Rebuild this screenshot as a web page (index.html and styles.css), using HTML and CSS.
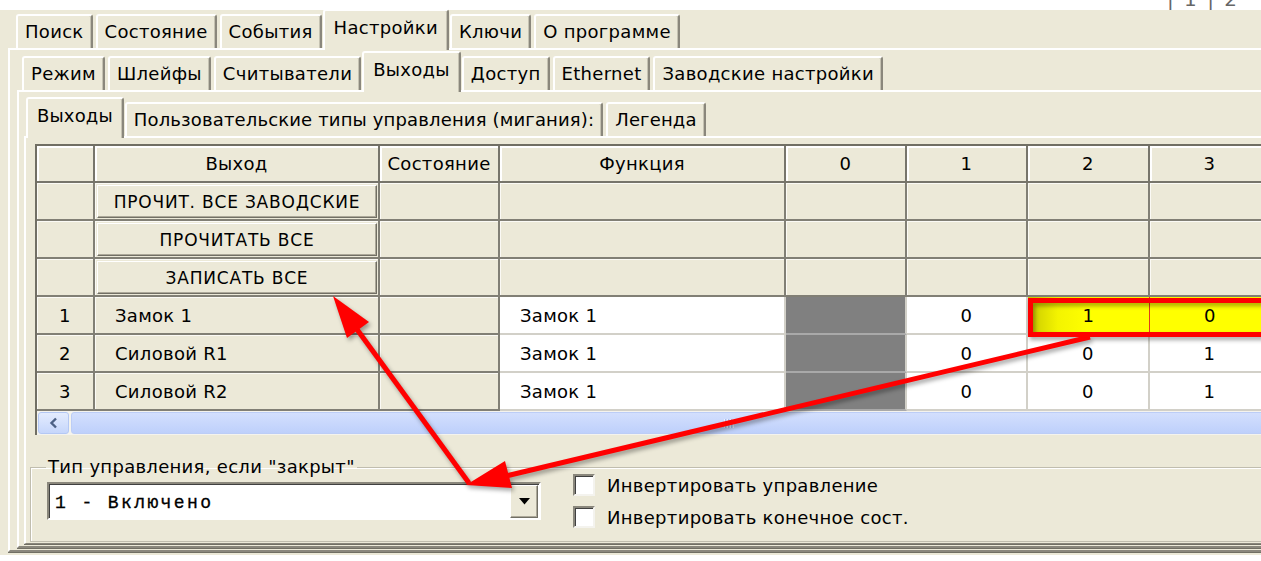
FILE: index.html
```html
<!DOCTYPE html>
<html lang="ru">
<head>
<meta charset="utf-8">
<title>Настройки — Выходы</title>
<link rel="stylesheet" href="styles.css">
</head>
<body>
<div class="topstrip"><span class="pager">| 1 | 2</span></div>
<div class="window">
  <div class="tabs t1">
    <div class="tab">Поиск</div>
    <div class="tab">Состояние</div>
    <div class="tab">События</div>
    <div class="tab sel">Настройки</div>
    <div class="tab">Ключи</div>
    <div class="tab">О программе</div>
  </div>
  <div class="page p1">
    <div class="tabs t2">
      <div class="tab">Режим</div>
      <div class="tab">Шлейфы</div>
      <div class="tab">Считыватели</div>
      <div class="tab sel">Выходы</div>
      <div class="tab">Доступ</div>
      <div class="tab">Ethernet</div>
      <div class="tab">Заводские настройки</div>
    </div>
    <div class="page p2">
      <div class="tabs t3">
        <div class="tab sel">Выходы</div>
        <div class="tab">Пользовательские типы управления (мигания):</div>
        <div class="tab">Легенда</div>
      </div>
      <div class="page p3">
        <div class="grid">
          <table class="outs">
            <colgroup>
              <col class="c-num"><col class="c-name"><col class="c-state"><col class="c-func">
              <col class="c-bit"><col class="c-bit"><col class="c-bit2"><col class="c-bit">
            </colgroup>
            <thead>
              <tr>
                <th></th><th>Выход</th><th>Состояние</th><th>Функция</th>
                <th>0</th><th>1</th><th>2</th><th>3</th>
              </tr>
            </thead>
            <tbody>
              <tr class="cmd">
                <td class="bg"></td>
                <td class="bg btn-cell"><div class="btn">ПРОЧИТ. ВСЕ ЗАВОДСКИЕ</div></td>
                <td class="bg"></td><td class="bg"></td><td class="bg"></td><td class="bg"></td><td class="bg"></td><td class="bg"></td>
              </tr>
              <tr class="cmd">
                <td class="bg"></td>
                <td class="bg btn-cell"><div class="btn">ПРОЧИТАТЬ ВСЕ</div></td>
                <td class="bg"></td><td class="bg"></td><td class="bg"></td><td class="bg"></td><td class="bg"></td><td class="bg"></td>
              </tr>
              <tr class="cmd">
                <td class="bg"></td>
                <td class="bg btn-cell"><div class="btn">ЗАПИСАТЬ ВСЕ</div></td>
                <td class="bg"></td><td class="bg"></td><td class="bg"></td><td class="bg"></td><td class="bg"></td><td class="bg"></td>
              </tr>
              <tr>
                <td class="bg num">1</td>
                <td class="bg name">Замок 1</td>
                <td class="bg"></td>
                <td class="w name">Замок 1</td>
                <td class="dk"></td>
                <td class="w bit">0</td>
                <td class="hl hl-first bit">1</td>
                <td class="hl bit">0</td>
              </tr>
              <tr>
                <td class="bg num">2</td>
                <td class="bg name">Силовой R1</td>
                <td class="bg"></td>
                <td class="w name">Замок 1</td>
                <td class="dk"></td>
                <td class="w bit">0</td>
                <td class="w bit">0</td>
                <td class="w bit">1</td>
              </tr>
              <tr>
                <td class="bg num">3</td>
                <td class="bg name">Силовой R2</td>
                <td class="bg"></td>
                <td class="w name">Замок 1</td>
                <td class="dk"></td>
                <td class="w bit">0</td>
                <td class="w bit">0</td>
                <td class="w bit">1</td>
              </tr>
            </tbody>
          </table>
          <div class="hscroll">
            <div class="sb-btn"><svg width="10" height="12" viewBox="0 0 10 12"><path d="M7 1.5 L2.5 6 L7 10.5" fill="none" stroke="#4d6185" stroke-width="2.4"/></svg></div>
            <div class="sb-thumb"><span class="grip"></span></div>
          </div>
        </div>
        <fieldset class="group">
          <legend>Тип управления, если "закрыт"</legend>
          <div class="group-row">
            <div class="combo">
              <span class="combo-text">1 - Включено</span>
              <span class="combo-drop"><svg width="11" height="7" viewBox="0 0 11 7"><path d="M0 0 H11 L5.5 6.5 Z" fill="#000"/></svg></span>
            </div>
            <div class="checks">
              <label class="check"><span class="box"></span>Инвертировать управление</label>
              <label class="check"><span class="box"></span>Инвертировать конечное сост.</label>
            </div>
          </div>
        </fieldset>
      </div>
    </div>
  </div>
</div>
<svg class="marks" width="1261" height="561" viewBox="0 0 1261 561">
  <g class="ink">
    <rect x="1030.5" y="300.5" width="300" height="34" fill="none" stroke="#ff0000" stroke-width="5"/>
    <line x1="1090" y1="337" x2="506" y2="476" stroke="#ff0000" stroke-width="5"/>
    <polygon points="466,485 512,488 505,461" fill="#ff0000"/>
    <line x1="469" y1="483" x2="356" y2="328" stroke="#ff0000" stroke-width="5"/>
    <polygon points="333,296 369,322 347,338" fill="#ff0000"/>
  </g>
</svg>
</body>
</html>
```
FILE: styles.css
```css
* { box-sizing: border-box; }

html, body {
  margin: 0;
  padding: 0;
  overflow: hidden;
  background: #fff;
}

body {
  width: 1261px;
  height: 561px;
  position: relative;
  font-family: "DejaVu Sans", "Noto Sans", sans-serif;
  font-size: 18px;
  letter-spacing: 0.3px;
  color: #000;
}

/* page switcher peeking over the window */
.topstrip {
  height: 10px;
  overflow: hidden;
  display: flex;
  justify-content: flex-end;
  padding-right: 22px;
}
.pager {
  font-size: 20px;
  line-height: 20px;
  margin-top: -11px;
  color: #666;
  letter-spacing: 2px;
}

.window {
  background: #ECE9D8;
  width: 1400px;
  height: 545px;
  padding-left: 8px;
}

/* tab strips */
.tabs {
  display: flex;
  align-items: flex-end;
  position: relative;
  z-index: 2;
}
.t1 { height: 38px; padding-left: 8px; }
.t2 { height: 39px; margin: 1px 0 0 12px; }
.t3 { height: 39px; margin: 5px 0 0 9px; letter-spacing: 0.15px; }

.tab {
  height: 34px;
  padding: 0 7px 2px;
  display: flex;
  align-items: center;
  white-space: nowrap;
  background: #ECE9D8;
  border-top: 2px solid #fff;
  border-left: 2px solid #fff;
  border-right: 2px solid #8a877c;
  border-radius: 3px 3px 0 0;
  box-shadow: inset -1px 0 0 #c5c2b2;
  margin-right: 3px;
}
.tab.sel {
  height: 41px;
  margin: 0 1px -2px -2px;
  padding: 0 9px 6px;
  position: relative;
  z-index: 3;
}

/* tab pages */
.page {
  background: #ECE9D8;
  border-top: 2px solid #fff;
  border-left: 2px solid #fff;
  border-bottom: 2px solid #8a877c;
  box-shadow: 0 1px 0 #716F64;
}
.p1 { padding-bottom: 2px; }
.p2 { margin-left: 7px; padding-bottom: 2px; }
.p3 { margin-left: 5px; padding-bottom: 1px; border-bottom-width: 1px; }

/* outputs grid */
.grid {
  margin: 6px 0 0 9px;
  width: 1352px;
  border-top: 2px solid #716F64;
  border-left: 2px solid #716F64;
  background: #ECE9D8;
  overflow: hidden;
}
.outs {
  border-collapse: separate;
  border-spacing: 0;
  table-layout: fixed;
  width: 1234px;
}
.c-num { width: 58px; }
.c-name { width: 285px; }
.c-state { width: 120px; }
.c-func { width: 286px; }
.c-bit { width: 121px; }
.c-bit2 { width: 122px; }

.outs th {
  height: 37px;
  font-weight: normal;
  text-align: center;
  padding: 0;
  background: #ECE9D8;
  border-right: 2px solid #77756b;
  border-bottom: 2px solid #77756b;
  box-shadow: inset 2px 2px 0 #fff;
  white-space: nowrap;
  overflow: hidden;
}
.outs td {
  height: 38px;
  padding: 0;
  white-space: nowrap;
  overflow: hidden;
}
.outs td.bg {
  background: #ECE9D8;
  border-right: 2px solid #817f75;
  border-bottom: 2px solid #817f75;
  box-shadow: inset 1px 1px 0 #fbfaf5;
}
.outs td.w {
  background: #fff;
  border-right: 2px solid #d2d0c8;
  border-bottom: 2px solid #d2d0c8;
}
.outs td.dk {
  background: #808080;
  border-right: 2px solid #d2d0c8;
  border-bottom: 2px solid #a9a9a9;
}
.outs td.hl {
  background: #ffff00;
  border-right: 1px solid #e23a1a;
  border-bottom: 2px solid #d2d0c8;
}
.outs td.hl-first {
  background: linear-gradient(90deg, #c8c800 0, #f4f400 30px, #ffff00 60px);
}
.num, .bit { text-align: center; }
.name { padding-left: 20px !important; }

.btn-cell { padding: 2px 1px 1px 2px !important; }
.btn {
  height: 33px;
  display: flex;
  align-items: center;
  justify-content: center;
  font-size: 17px;
  letter-spacing: 0.8px;
  background: #ECE9D8;
  border: 1px solid;
  border-color: #fff #716F64 #716F64 #fff;
  box-shadow: inset -1px -1px 0 #aca899;
}

/* horizontal scroll bar */
.hscroll {
  display: flex;
  height: 24px;
  padding: 1px 0 1px 1px;
  background: #f4f3ee;
}
.sb-btn {
  width: 31px;
  display: flex;
  align-items: center;
  justify-content: center;
  border: 1px solid #b4c8f4;
  border-radius: 3px;
  background: linear-gradient(#e4ecfe, #c6d6fb);
}
.sb-thumb {
  flex: 1;
  margin-left: 2px;
  display: flex;
  align-items: center;
  justify-content: center;
  border: 1px solid #bccdf6;
  border-radius: 3px;
  background: linear-gradient(#d3dffd, #bed0fb);
}
.grip {
  width: 10px;
  height: 9px;
  background: repeating-linear-gradient(90deg, #eef3fe 0 1px, #a9bdf0 1px 2px, transparent 2px 3px);
}

/* group box */
.group {
  margin: 21px 0 0 4px;
  width: 1340px;
  border: 1px solid #c0bdae;
  box-shadow: 1px 1px 0 #fff inset;
  padding: 0 15px 13px 15px;
}
.group legend {
  padding: 0 2px;
  line-height: 22px;
}
.group-row {
  display: flex;
  align-items: center;
  margin-top: -4px;
}
.combo {
  width: 494px;
  height: 38px;
  margin-left: 1px;
  display: flex;
  align-items: center;
  justify-content: space-between;
  background: #fff;
  border: 2px solid;
  border-color: #8a877c #fff #fff #8a877c;
  box-shadow: inset 1px 1px 0 #404040;
  padding: 1px 1px 1px 6px;
}
.combo-text {
  font-family: "Liberation Mono", "DejaVu Sans Mono", monospace;
  font-size: 18px;
  letter-spacing: 2.4px;
  padding-top: 3px;
  -webkit-text-stroke: 0.3px #000;
}
.combo-drop {
  width: 28px;
  height: 33px;
  display: flex;
  align-items: center;
  justify-content: center;
  background: #ECE9D8;
  border: 1px solid;
  border-color: #fff #716F64 #716F64 #fff;
  box-shadow: inset -1px -1px 0 #aca899;
}
.checks {
  display: flex;
  flex-direction: column;
  gap: 10px;
  margin-left: 32px;
}
.check {
  display: flex;
  align-items: center;
  gap: 12px;
  height: 22px;
}
.box {
  width: 22px;
  height: 22px;
  background: #fff;
  border: 2px solid;
  border-color: #8a877c #f4f3ee #f4f3ee #8a877c;
  box-shadow: inset 1px 1px 0 #404040;
}

/* red call-outs drawn over the form */
.marks {
  position: absolute;
  left: 0;
  top: 0;
  pointer-events: none;
}
.ink {
  filter: drop-shadow(2px 3px 2px rgba(0, 0, 0, 0.35));
}
```
